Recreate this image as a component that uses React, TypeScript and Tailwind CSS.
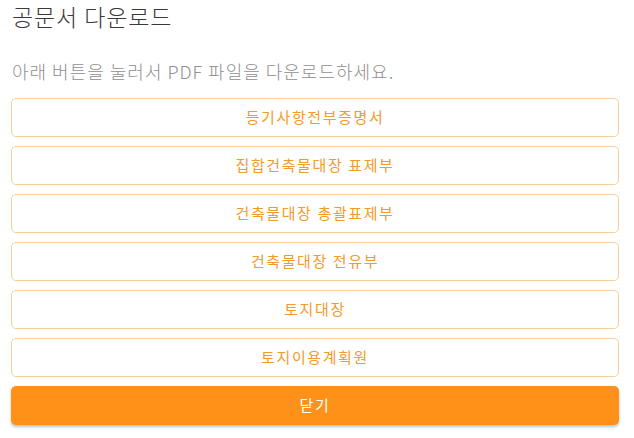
const docs = [
  "등기사항전부증명서",
  "집합건축물대장 표제부",
  "건축물대장 총괄표제부",
  "건축물대장 전유부",
  "토지대장",
  "토지이용계획원",
];

export default function App() {
  return (
    <div
      className="w-[634px] h-[438px] bg-white pl-[11px] pr-[15px]"
      style={{ fontFamily: '"Noto Sans CJK KR", "Noto Sans", sans-serif' }}
    >
      <h2 className="h-[32px] leading-[32px] text-[23px] tracking-[0.9px] font-light text-[#3a3a3a] pl-[1px]">
        공문서 다운로드
      </h2>
      <p className="mt-[26px] h-[27px] leading-[27px] text-[18px] tracking-[1px] font-light text-[#8f8f8f] pl-[1px]">
        아래 버튼을 눌러서 PDF 파일을 다운로드하세요.
      </p>
      <div className="mt-[13px] flex flex-col gap-[9px]">
        {docs.map((d) => (
          <button
            key={d}
            className="h-[39px] w-full rounded-[5px] border border-[#f6cf9c] bg-white text-[15px] tracking-[1.6px] text-[#f29a2a]"
          >
            {d}
          </button>
        ))}
        <button className="h-[39px] w-full rounded-[5px] bg-[#ff9119] text-[15px] tracking-[1.6px] text-white shadow-[0_2px_3px_rgba(0,0,0,0.25)]">
          닫기
        </button>
      </div>
    </div>
  );
}
